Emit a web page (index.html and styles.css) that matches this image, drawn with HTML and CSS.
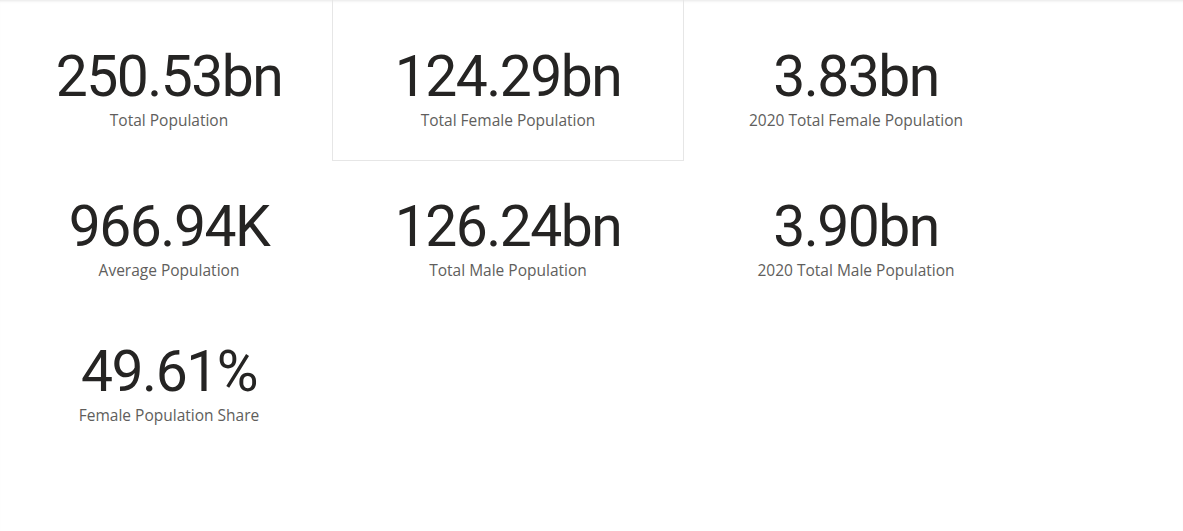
FILE: index.html
```html
<!DOCTYPE html>
<html lang="en">
<head>
<meta charset="utf-8">
<title>Population Cards</title>
<link rel="stylesheet" href="styles.css">
</head>
<body>
<div class="page">
  <div class="grid">
    <div class="card">
      <div class="value">250.53bn</div>
      <div class="label">Total Population</div>
    </div>
    <div class="card card-selected">
      <div class="value">124.29bn</div>
      <div class="label">Total Female Population</div>
    </div>
    <div class="card">
      <div class="value">3.83bn</div>
      <div class="label">2020 Total Female Population</div>
    </div>
    <div class="card">
      <div class="value">966.94K</div>
      <div class="label">Average Population</div>
    </div>
    <div class="card">
      <div class="value">126.24bn</div>
      <div class="label">Total Male Population</div>
    </div>
    <div class="card">
      <div class="value">3.90bn</div>
      <div class="label">2020 Total Male Population</div>
    </div>
    <div class="card">
      <div class="value">49.61%</div>
      <div class="label">Female Population Share</div>
    </div>
  </div>
</div>
</body>
</html>
```
FILE: styles.css
```css
html, body {
  margin: 0;
  padding: 0;
  background: #ffffff;
}

.page {
  width: 1183px;
  height: 531px;
  box-sizing: border-box;
  padding-left: 6px;
  box-shadow: inset 0 3px 3px -2px rgba(0, 0, 0, 0.10);
  overflow: hidden;
}

.grid {
  display: grid;
  grid-template-columns: 326px 352px 344px;
  grid-template-rows: 150px 145px 145px;
}

.card {
  display: flex;
  flex-direction: column;
  align-items: center;
  align-self: start;
  padding-top: 48px;
  box-sizing: border-box;
}

.card-selected {
  height: 161px;
  border: 1px solid #e6e6e6;
  border-top: none;
}

.value {
  font-family: Roboto, "Liberation Sans", sans-serif;
  font-size: 57px;
  line-height: 57px;
  color: #252423;
  letter-spacing: -1.5px;
  white-space: nowrap;
}

.label {
  margin-top: 5px;
  font-family: "Open Sans", "Noto Sans", sans-serif;
  font-size: 15.5px;
  line-height: 20px;
  color: #605e5c;
  white-space: nowrap;
}
```
